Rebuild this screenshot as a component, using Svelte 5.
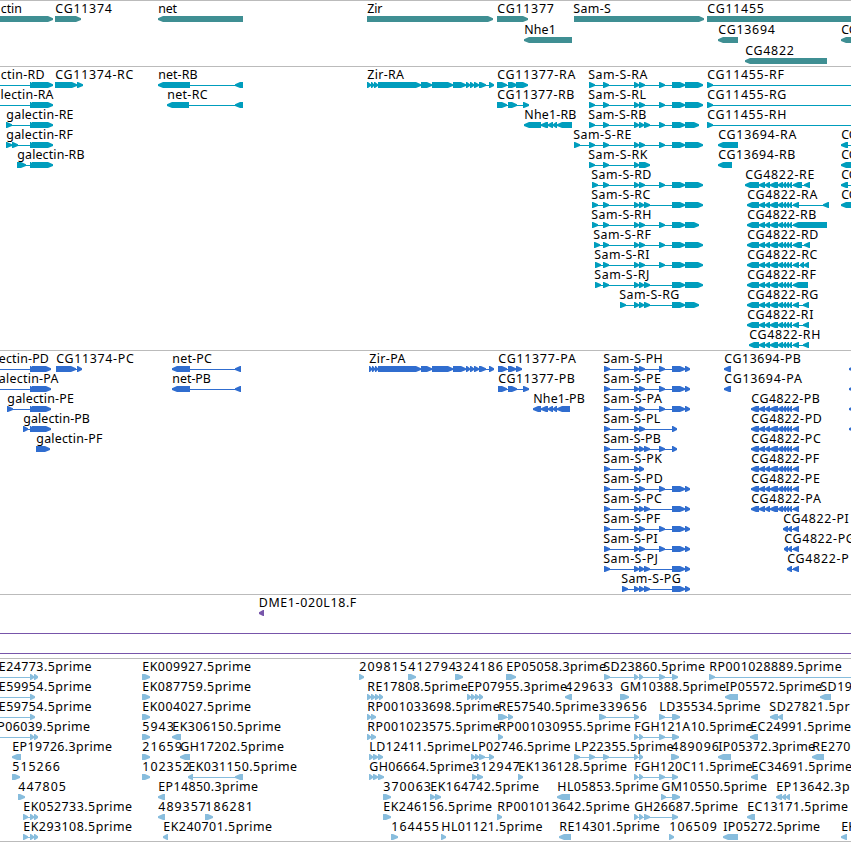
<script>
  // Feature tuple: [row, label, labelX, strand, exons]; exons are "start-end" pairs.
  const galR = '30-33 32-53';
  const galP = '30-33 32-51';
  const zir = '378-421 421-432 432-453 453-466 466-470 470-474 474-479 479-486 489-494';
  const cg4822 = '759-765 765-770 770-778 778-783 783-786 786-789 789-792';
  const samP = '604-610 634-639 639-645 659-665 672-685 685-690';
  const samPC = '604-610 634-639 639-644 644-650 672-685 685-690';

  const tracks = [
    {
      name: 'genes', height: 66, pitch: 21, color: '#3f8f93',
      items: [
        [0, 'ctin', 0.5, 1, '-10-53'],
        [0, 'CG11374', 55, 1, '55-81'],
        [0, 'net', 158, -1, '158-243'],
        [0, 'Zir', 367, 1, '367-493'],
        [0, 'CG11377', 497, 1, '497-528'],
        [1, 'Nhe1', 524, -1, '524-572'],
        [0, 'Sam-S', 573, 1, '574-704'],
        [0, 'CG11455', 707, 1, '707-880'],
        [1, 'CG13694', 718, -1, '718-738'],
        [2, 'CG4822', 745, -1, '745-827'],
        [1, 'CG', 841, -1, '841-880']
      ]
    },
    {
      name: 'transcripts', height: 284, pitch: 20, color: '#009dbd',
      items: [
        [0, 'ctin-RD', 0.5, 1, `-10--5 ${galR}`],
        [1, 'alectin-RA', -7, 1, `-10--5 ${galR}`],
        [2, 'galectin-RE', 6, 1, `6-12 ${galR}`],
        [3, 'galectin-RF', 6, 1, `6-12 12-18 ${galR}`],
        [4, 'galectin-RB', 17, 1, `17-26 ${galR}`],
        [0, 'CG11374-RC', 55, 1, '55-77 77-83'],
        [0, 'net-RB', 158, -1, '158-190 235-243'],
        [1, 'net-RC', 167, -1, '167-189 235-243'],
        [0, 'Zir-RA', 367, 1, `367-371 371-374 374-378 ${zir}`],
        [0, 'CG11377-RA', 497, 1, '497-507 508-517 516-528'],
        [1, 'CG11377-RB', 497, 1, '497-507 508-517 523-529'],
        [2, 'Nhe1-RB', 524, -1, '524-541 541-548 548-553 553-557 557-572'],
        [0, 'Sam-S-RA', 588, 1, '589-595 603-609 634-639 639-645 659-665 672-685 685-703'],
        [1, 'Sam-S-RL', 588, 1, '589-595 603-609 634-639 639-645 659-665 672-685 685-703'],
        [2, 'Sam-S-RB', 588, 1, '589-595 603-609 634-639 639-644 644-650 659-665 672-685 685-699'],
        [3, 'Sam-S-RE', 573, 1, '574-580 589-595 603-609 634-639 639-645 659-665 672-685 685-703'],
        [4, 'Sam-S-RK', 588, 1, '589-595 603-609 634-639 639-650'],
        [5, 'Sam-S-RD', 591, 1, '592-598 603-609 634-639 639-645 659-665 672-685 685-703'],
        [6, 'Sam-S-RC', 591, 1, '592-598 603-609 634-639 639-644 644-650 672-685 685-703'],
        [7, 'Sam-S-RH', 591, 1, '592-598 603-609 634-639 639-645 659-665 672-685 685-699'],
        [8, 'Sam-S-RF', 593, 1, '594-600 603-609 634-639 639-645 659-665 672-685 685-703'],
        [9, 'Sam-S-RI', 594, 1, '595-601 603-609 634-639 639-645 659-665 672-685 685-703'],
        [10, 'Sam-S-RJ', 594, 1, '595-601 603-609 634-639 639-644 644-650 672-685 685-703'],
        [11, 'Sam-S-RG', 619, 1, '620-626 634-639 639-644 644-650 672-685 685-699'],
        [0, 'CG11455-RF', 707, 1, '707-713 870-880'],
        [1, 'CG11455-RG', 707, 1, '707-713 870-880'],
        [2, 'CG11455-RH', 707, 1, '707-713 870-880'],
        [3, 'CG13694-RA', 718, -1, '718-738'],
        [4, 'CG13694-RB', 718, -1, '718-732'],
        [3, 'CG', 841, -1, '841-848 870-880'],
        [4, 'CG', 841, -1, '841-880'],
        [5, 'CG', 841, -1, '841-848 870-880'],
        [6, 'CG', 841, -1, '841-880'],
        [5, 'CG4822-RE', 745, -1, `745-759 ${cg4822} 793-802 804-810`],
        [6, 'CG4822-RA', 747, -1, `747-759 ${cg4822} 793-799 823-829`],
        [7, 'CG4822-RB', 747, -1, `747-759 ${cg4822} 793-827`],
        [8, 'CG4822-RD', 747, -1, `747-759 ${cg4822} 793-802 804-810`],
        [9, 'CG4822-RC', 747, -1, `747-759 ${cg4822} 793-799 800-804 804-809`],
        [10, 'CG4822-RF', 747, -1, `747-759 ${cg4822} 793-808`],
        [11, 'CG4822-RG', 747, -1, `747-759 ${cg4822} 793-799 803-809`],
        [12, 'CG4822-RI', 747, -1, `747-759 ${cg4822} 793-799 803-809`],
        [13, 'CG4822-RH', 749, -1, `749-759 ${cg4822} 793-799 803-809`]
      ]
    },
    {
      name: 'proteins', height: 244, pitch: 20, color: '#306dcf',
      items: [
        [0, 'ectin-PD', -1.5, 1, `-10--5 ${galP}`],
        [1, 'alectin-PA', -1.5, 1, `-10--5 ${galP}`],
        [2, 'galectin-PE', 7, 1, `7-13 ${galP}`],
        [3, 'galectin-PB', 23, 1, `23-28 ${galP}`],
        [4, 'galectin-PF', 36, 1, '36-50'],
        [0, 'CG11374-PC', 56, 1, '56-76 77-82'],
        [0, 'net-PC', 172, -1, '172-190 235-241'],
        [1, 'net-PB', 172, -1, '172-190 235-241'],
        [0, 'Zir-PA', 369, 1, `369-372 372-375 375-378 ${zir}`],
        [0, 'CG11377-PA', 498, 1, '498-507 508-516 516-522'],
        [1, 'CG11377-PB', 498, 1, '498-507 508-517 523-529'],
        [2, 'Nhe1-PB', 533, -1, '533-541 541-548 548-553 553-557 557-570'],
        [0, 'Sam-S-PH', 603, 1, samP],
        [1, 'Sam-S-PE', 603, 1, samP],
        [2, 'Sam-S-PA', 603, 1, samP],
        [3, 'Sam-S-PL', 603, 1, '604-610 634-639 639-645 672-677'],
        [4, 'Sam-S-PB', 603, 1, '604-610 634-639 639-644 644-650 659-665 672-677'],
        [5, 'Sam-S-PK', 603, 1, '604-610 634-639 639-644'],
        [6, 'Sam-S-PD', 603, 1, samP],
        [7, 'Sam-S-PC', 603, 1, samPC],
        [8, 'Sam-S-PF', 603, 1, samP],
        [9, 'Sam-S-PI', 603, 1, samP],
        [10, 'Sam-S-PJ', 603, 1, samPC],
        [11, 'Sam-S-PG', 621, 1, '622-628 634-639 639-644 644-650 672-685 685-690'],
        [0, 'CG13694-PB', 724, -1, '724-731'],
        [1, 'CG13694-PA', 724, -1, '724-731'],
        [2, 'CG4822-PB', 751, -1, `751-759 ${cg4822} 793-799`],
        [3, 'CG4822-PD', 751, -1, `751-759 ${cg4822} 793-799`],
        [4, 'CG4822-PC', 751, -1, `751-759 ${cg4822} 793-799`],
        [5, 'CG4822-PF', 751, -1, `751-759 ${cg4822} 793-799`],
        [6, 'CG4822-PE', 751, -1, `751-759 ${cg4822} 793-799`],
        [7, 'CG4822-PA', 751, -1, `751-759 ${cg4822} 793-799`],
        [8, 'CG4822-PI', 783, -1, '783-788 788-792 793-799'],
        [9, 'CG4822-PG', 784, -1, '784-788 788-792 793-799'],
        [10, 'CG4822-P', 787, -1, '787-792 793-799'],
        [0, '', 850, -1, '849-856'],
        [1, '', 850, -1, '849-856'],
        [2, '', 850, -1, '849-856'],
        [3, '', 850, -1, '849-856']
      ]
    },
    {
      name: 'bac', height: 64, pitch: 20, color: '#7755aa', rules: [38, 58],
      items: [[0, 'DME1-020L18.F', 258.5, -1, '259-264']]
    },
    {
      name: 'ests', height: 183, pitch: 20, color: '#88bddd',
      items: [
        [0, 'E24773.5prime', -1.5, 1, '-10--5 30-34 34-38'],
        [0, 'EK009927.5prime', 142, 1, '142-150'],
        [0, '209815', 359, 1, '359-364'],
        [0, '412794', 408, 1, '408-416'],
        [0, '324186', 455, 1, '455-463'],
        [0, 'EP05058.3prime', 506, 1, '506-516'],
        [0, 'SD23860.5prime', 603, 1, '604-610 634-638 639-643 659-665 672-678'],
        [0, 'RP001028889.5prime', 709, 1, '709-715 870-880'],
        [1, 'E59954.5prime', -1.5, 1, '-10--5 30-35'],
        [1, 'EK087759.5prime', 142, 1, '142-150'],
        [1, 'RE17808.5prime', 367, 1, '367-371 371-375 375-379 379-383'],
        [1, 'EP07955.3prime', 467, 1, '467-471 471-475 475-479 479-483'],
        [1, '429633', 565, -1, '565-572'],
        [1, 'GM10388.5prime', 620, 1, '620-629'],
        [1, 'IP05572.5prime', 725, -1, '725-738'],
        [1, 'SD19', 820, -1, '820-831'],
        [2, 'E59754.5prime', -1.5, 1, '-10--5 30-35'],
        [2, 'EK004027.5prime', 142, 1, '142-150'],
        [2, 'RP001033698.5prime', 367, 1, '367-371 371-376'],
        [2, 'RE57540.5prime', 498, 1, '498-507 508-513'],
        [2, '339656', 599, 1, '599-606 634-639'],
        [2, 'LD35534.5prime', 659, 1, '659-665 672-680'],
        [2, 'SD27821.5pr', 769, -1, '770-778 778-783'],
        [3, 'P06039.5prime', -3, 1, '-10--5 30-34 34-38'],
        [3, '5943', 142, 1, '142-150'],
        [3, 'EK306150.5prime', 172, -1, '172-181'],
        [3, 'RP001023575.5prime', 367, 1, '367-371 371-376'],
        [3, 'RP001030955.5prime', 498, 1, '498-503'],
        [3, 'FGH121A10.5prime', 634, 1, '634-638 639-643 659-665 672-679'],
        [3, 'EC24991.5prime', 750, -1, '750-758'],
        [4, 'EP19726.3prime', 12, -1, '12-21'],
        [4, '21659', 142, 1, '142-150'],
        [4, 'GH17202.5prime', 180, -1, '180-190'],
        [4, 'LD12411.5prime', 369, 1, '369-373 373-378 378-383'],
        [4, 'LP02746.5prime', 471, 1, '471-475 475-479 479-485 489-494'],
        [4, 'LP22355.5prime', 574, 1, '574-580 589-595 603-609 634-638 639-643'],
        [4, '489096', 671, 1, '671-679'],
        [4, 'IP05372.3prime', 718, -1, '718-731'],
        [4, 'RE270', 812, -1, '812-824'],
        [5, '515266', 12, 1, '12-20'],
        [5, '102352', 142, 1, '142-150'],
        [5, 'EK031150.5prime', 188, -1, '188-193 235-243'],
        [5, 'GH06664.5prime', 369, 1, '369-373 373-378 378-384'],
        [5, '312947', 472, 1, '472-477 477-483'],
        [5, 'EK136128.5prime', 518, 1, '518-523'],
        [5, 'FGH120C11.5prime', 634, 1, '634-638 639-643 659-665 672-678'],
        [5, 'EC34691.5prime', 751, -1, '751-758'],
        [6, '447805', 18, 1, '18-25'],
        [6, 'EP14850.3prime', 158, -1, '158-165'],
        [6, '370063', 383, 1, '383-391'],
        [6, 'EK164742.5prime', 430, 1, '430-435 435-441'],
        [6, 'HL05853.5prime', 557, -1, '557-570'],
        [6, 'GM10550.5prime', 661, 1, '661-666 672-680'],
        [6, 'EP13642.3p', 776, -1, '776-782 782-786 786-790'],
        [7, 'EK052733.5prime', 23, 1, '23-28 30-34 34-38'],
        [7, '489357', 158, -1, '158-165'],
        [7, '186281', 205, 1, '205-213'],
        [7, 'EK246156.5prime', 383, 1, '383-391'],
        [7, 'RP001013642.5prime', 497, 1, '497-502'],
        [7, 'GH26687.5prime', 634, 1, '634-638 639-643 644-650 672-678'],
        [7, 'EC13171.5prime', 747, -1, '747-755'],
        [8, 'EK293108.5prime', 23, 1, '23-28 30-34 34-38'],
        [8, 'EK240701.5prime', 163, -1, '163-168'],
        [8, '164455', 391, 1, '391-398'],
        [8, 'HL01121.5prime', 441, 1, '441-446'],
        [8, 'RE14301.5prime', 559, -1, '559-571'],
        [8, '106509', 669, 1, '669-674'],
        [8, 'IP05272.5prime', 723, -1, '723-738'],
        [8, 'EK', 841, -1, '841-847']
      ]
    }
  ];

  // Advance widths of the label face, in pixels.
  const adv = {
    C: 8, G: 9, R: 7.6, A: 8, B: 7, D: 9, E: 7, F: 6.5, H: 9, I: 4, J: 4, K: 8, L: 6.5,
    M: 11, N: 9, P: 7, S: 7, Z: 7, a: 7, c: 6, e: 7, g: 8, h: 8, i: 3.5, l: 3.5, m: 11,
    n: 7.6, p: 7.8, r: 5, t: 4.5, '-': 6, '.': 4
  };
  const labelWidth = (s) => [...s].reduce((w, ch) => w + (adv[ch] ?? 8), 0) - 0.5;

  const parse = (s) => s.split(' ').map((p) => {
    const m = p.match(/^(-?\d+)-(-?\d+)$/);
    return [Number(m[1]), Number(m[2])];
  });

  // Exon block whose last pixels taper to a blunt tip in strand direction.
  function arrow([a, b], dir, y) {
    const head = Math.min(5, b - a - 1);
    if (dir > 0) {
      const n = b - head;
      return `M${a} ${y}H${n}L${b} ${y + 2.2}V${y + 4}L${n} ${y + 6}H${a}Z`;
    }
    const n = a + head;
    return `M${b} ${y}H${n}L${a} ${y + 2.2}V${y + 4}L${n} ${y + 6}H${b}Z`;
  }

  const view = tracks.map((t) => ({
    ...t,
    rules: t.rules ?? [],
    features: t.items.map(([row, label, x, dir, ex]) => {
      const exons = parse(ex);
      const y = row * t.pitch;
      return {
        label, x: x + 0.3, y,
        start: exons[0][0],
        span: exons[exons.length - 1][1] - exons[0][0],
        width: labelWidth(label),
        d: exons.map((e) => arrow(e, dir, y + 15)).join('')
      };
    })
  }));
</script>

<main class="browser">
  {#each view as t (t.name)}
    <section class="track" style:height="{t.height}px">
      <svg width="851" height={t.height - 1}>
        {#each t.rules as r}
          <rect class="crisp" x="0" y={r} width="851" height="1" fill={t.color} />
        {/each}
        {#each t.features as f}
          <g fill={t.color}>
            <rect class="crisp" x={f.start} y={f.y + 18} width={f.span - 2} height="1" />
            <path d={f.d} />
          </g>
          {#if f.label}
            <text x={f.x} y={f.y + 12} textLength={f.width}>{f.label}</text>
          {/if}
        {/each}
      </svg>
    </section>
  {/each}
</main>

<style>
  :global(body) {
    margin: 0;
    background: #fff;
  }
  .browser {
    display: flex;
    flex-direction: column;
    width: 851px;
    height: 842px;
    box-sizing: border-box;
    overflow: hidden;
    border-bottom: 1px solid #bbb;
    background: #fff;
  }
  .track {
    flex: none;
    box-sizing: border-box;
    border-top: 1px solid #bbb;
    overflow: hidden;
  }
  svg {
    display: block;
    overflow: hidden;
  }
  .crisp {
    shape-rendering: crispEdges;
  }
  text {
    font: 12.4px 'Noto Sans', 'DejaVu Sans', sans-serif;
    fill: #000;
  }
</style>
